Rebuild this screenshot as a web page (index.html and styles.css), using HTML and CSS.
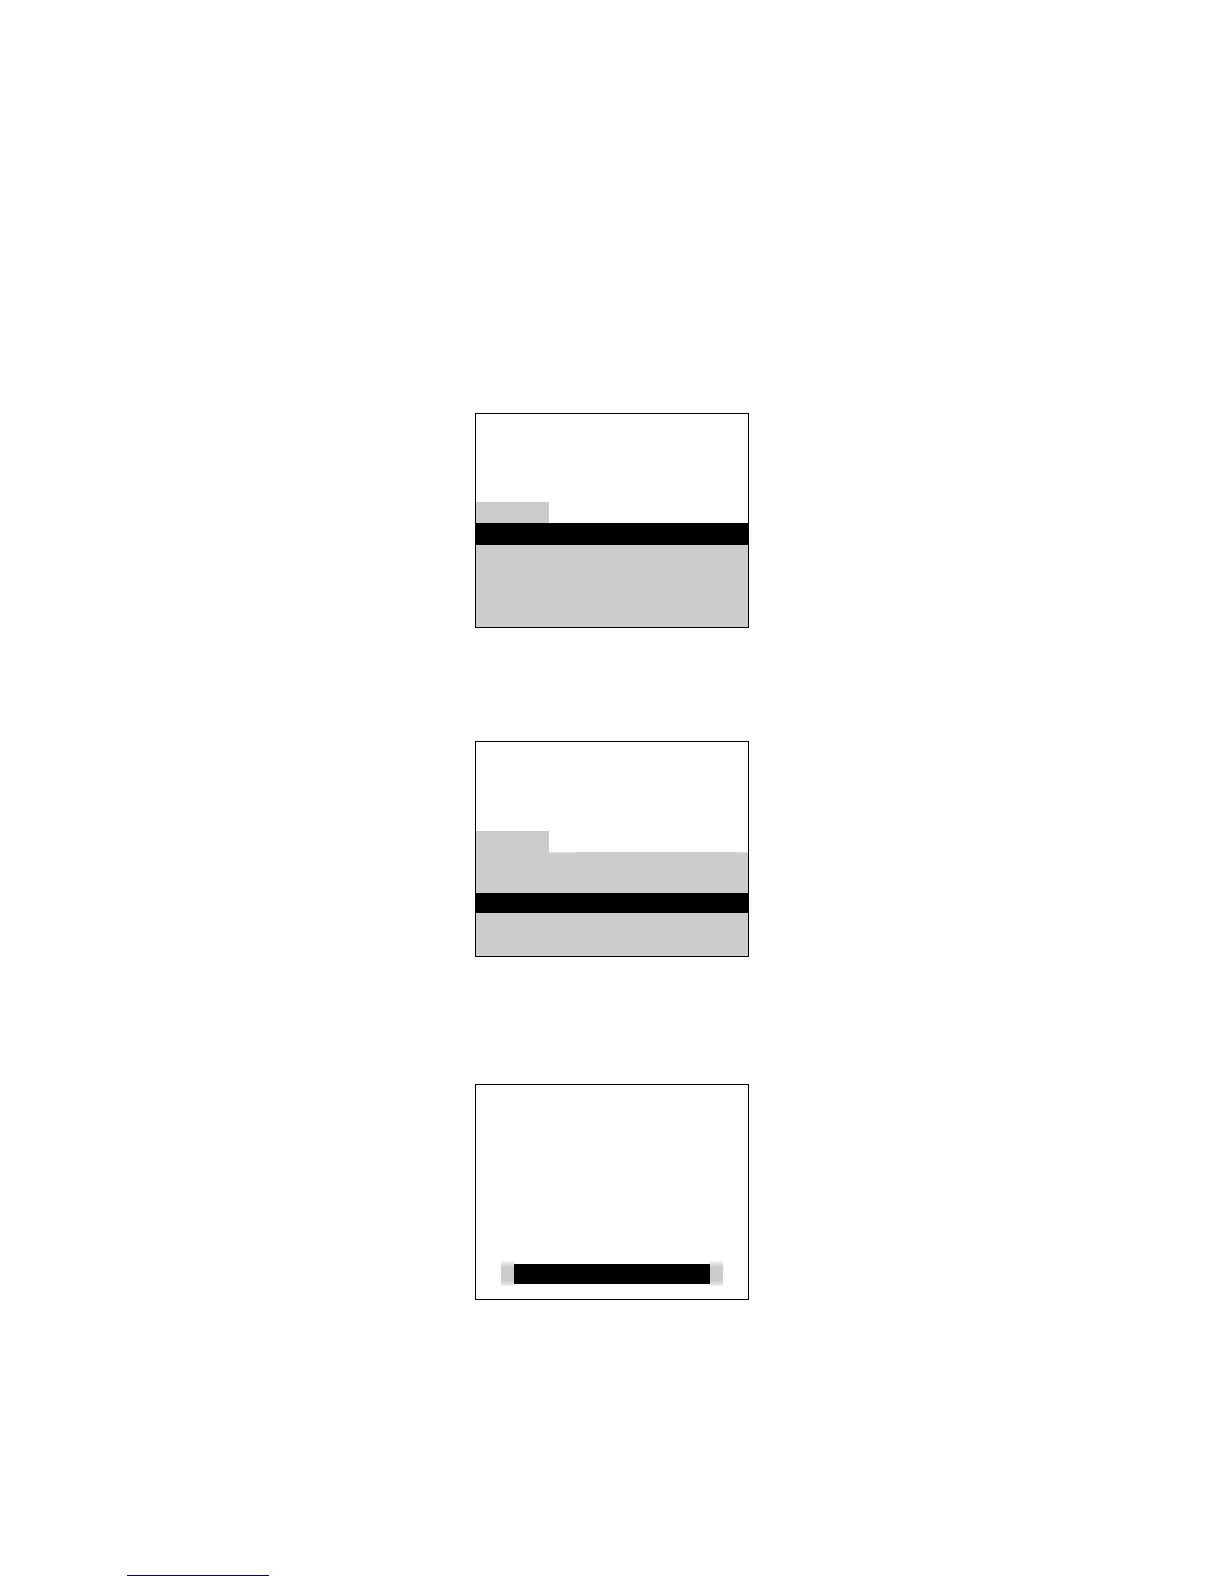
FILE: index.html
```html
<!DOCTYPE html>
<html lang="en">
<head>
<meta charset="utf-8">
<meta name="viewport" content="width=device-width, initial-scale=1">
<title>Screens</title>
<link rel="stylesheet" href="styles.css">
</head>
<body>
<main class="page">
  <section class="screen menu-first">
    <div class="tab"></div>
    <div class="selected"></div>
    <div class="list"></div>
  </section>
  <section class="screen menu-third">
    <div class="tab"></div>
    <div class="list list-top"></div>
    <div class="selected"></div>
    <div class="list"></div>
  </section>
  <section class="screen prompt">
    <div class="prompt-bar"><div class="prompt-field"></div></div>
  </section>
  <hr class="footer-rule">
</main>
</body>
</html>
```
FILE: styles.css
```css
body {
  margin: 0;
  background: #fff;
  font-family: "Liberation Sans", Arial, sans-serif;
}

.page {
  display: flex;
  flex-direction: column;
  align-items: center;
  padding: 413px 16px 8px;
}

.screen {
  box-sizing: border-box;
  display: flex;
  flex-direction: column;
  width: 100%;
  max-width: 274px;
  border: 1px solid #000;
}

.tab {
  width: 73px;
  height: 21px;
  background: #ccc;
}

.selected {
  background: #000;
}

.list {
  background: #ccc;
}

.menu-first {
  padding-top: 88px;
}

.menu-first .selected {
  height: 22px;
}

.menu-first .list {
  height: 82px;
}

.menu-third {
  margin-top: 113px;
  padding-top: 89px;
}

.menu-third .selected {
  height: 20px;
}

.menu-third .list {
  height: 43px;
}

/* The top edge fades slightly beside the tab and at the right border. */
.menu-third .list-top {
  height: 41px;
  background:
    linear-gradient(#e6e6e6, #ccc) 73px 0 / 26px 2px no-repeat,
    linear-gradient(#e0e0e0, #ccc) right top / 12px 2px no-repeat,
    #ccc;
}

.prompt {
  margin-top: 127px;
  padding: 176px 25px 13px;
}

.prompt-bar {
  padding: 3px 13px 2px;
  background: linear-gradient(#f6f6f6, #ccc 6px, #ccc 20px, #f2f2f2);
}

.prompt-field {
  height: 20px;
  background: #000;
  box-shadow: 0 -3px #fff, 0 2px #fff;
}

.footer-rule {
  align-self: flex-start;
  width: 142px;
  height: 1px;
  margin: 275px 0 0 111px;
  border: 0;
  background: #000080;
}
```
